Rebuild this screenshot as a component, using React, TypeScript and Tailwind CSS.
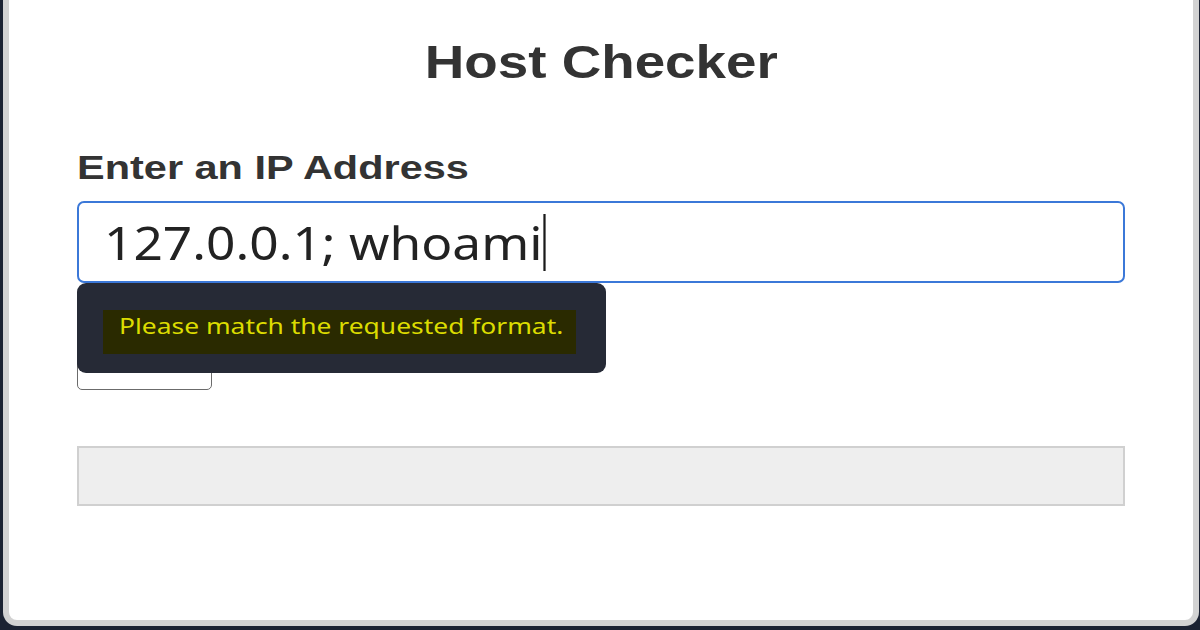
import React from "react"

const sans = "font-['Liberation_Sans',Arial,sans-serif]"
const noto = "font-['Noto_Sans','Open_Sans',sans-serif]"

export default function App() {
  return (
    <div className="h-[630px] w-[1200px] overflow-hidden bg-[#1b2232]">
      {/* Card */}
      <div className="ml-[3px] h-[626px] w-[1196px] rounded-b-[14px] border-x-[6px] border-b-[6px] border-t-0 border-[#d2d2d2] bg-white px-[68px]">
        {/* Title */}
        <div className="pt-[39px] text-center">
          <h1 className={`${sans} inline-block scale-x-[1.19] text-[46px] font-bold leading-none text-[#333333]`}>
            Host Checker
          </h1>
        </div>

        {/* Label */}
        <label className={`${sans} mt-[65px] block origin-left scale-x-[1.22] text-[34px] font-bold leading-none text-[#333333]`}>
          Enter an IP Address
        </label>

        {/* Input + validation bubble */}
        <div className="relative mt-[17px]">
          <div className="flex h-[82px] items-center rounded-[7px] border-2 border-[#3b78d8] bg-white pl-[25px]">
            <span className="inline-flex origin-left scale-x-[1.118] items-center">
              <span className={`${noto} text-[46px] leading-none text-[#222222]`}>127.0.0.1; whoami</span>
              <span className="ml-[1px] h-[57px] w-[2px] bg-[#1a1a1a]" />
            </span>
          </div>

          <div className="absolute left-0 top-full z-10 h-[90px] w-[529px] rounded-[9px] bg-[#262a36] pl-[26px] pt-[27px]">
            <div className="h-[44px] w-[473px] bg-[#2a2a00] pl-[16px] pt-[4px]">
              <span className={`${noto} inline-block origin-left scale-x-[1.2] whitespace-nowrap text-[22px] leading-none text-[#dcdc00]`}>
                Please match the requested format.
              </span>
            </div>
          </div>
        </div>

        {/* Submit button (hidden under bubble) */}
        <button className="mt-[57px] block h-[50px] w-[135px] rounded-[5px] border-[1.5px] border-[#6b6b6b] bg-white" />

        {/* Result */}
        <div className="mt-[56px] h-[60px] border-2 border-[#d0d0d0] bg-[#eeeeee]" />
      </div>
    </div>
  )
}
